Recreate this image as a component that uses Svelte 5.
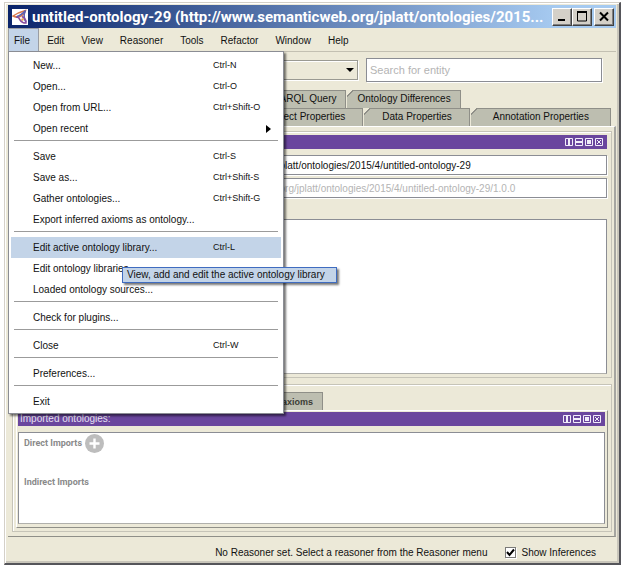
<script>
  const menus = ['File', 'Edit', 'View', 'Reasoner', 'Tools', 'Refactor', 'Window', 'Help'];
  const groups = [
    [
      { label: 'New...', keys: 'Ctrl-N' },
      { label: 'Open...', keys: 'Ctrl-O' },
      { label: 'Open from URL...', keys: 'Ctrl+Shift-O' },
      { label: 'Open recent', sub: true }
    ],
    [
      { label: 'Save', keys: 'Ctrl-S' },
      { label: 'Save as...', keys: 'Ctrl+Shift-S' },
      { label: 'Gather ontologies...', keys: 'Ctrl+Shift-G' },
      { label: 'Export inferred axioms as ontology...' }
    ],
    [
      { label: 'Edit active ontology library...', keys: 'Ctrl-L', active: true, tip: 'View, add and edit the active ontology library' },
      { label: 'Edit ontology libraries...' },
      { label: 'Loaded ontology sources...' }
    ],
    [{ label: 'Check for plugins...' }],
    [{ label: 'Close', keys: 'Ctrl-W' }],
    [{ label: 'Preferences...' }],
    [{ label: 'Exit' }]
  ];
  let iri = $state('http://www.semanticweb.org/jplatt/ontologies/2015/4/untitled-ontology-29');
  let version = $state('');
  let search = $state('');
  let inferences = $state(true);
</script>

{#snippet viewButtons()}
  <span class="view-buttons">
    <button aria-label="Split vertically"><svg width="8" height="8" viewBox="0 0 8 8"><path d="M.5 .5h7v7h-7z" /><path d="M4 0v8" stroke-width="2" /></svg></button>
    <button aria-label="Split horizontally"><svg width="8" height="8" viewBox="0 0 8 8"><path d="M.5 .5h7v7h-7z" /><path d="M0 4h8" stroke-width="2" /></svg></button>
    <button aria-label="Float view"><svg width="8" height="8" viewBox="0 0 8 8"><path d="M.5 .5h7v7h-7z" /><path class="solid" d="M2 2h4v4h-4z" /></svg></button>
    <button aria-label="Close view"><svg width="8" height="8" viewBox="0 0 8 8"><path d="M.5 .5h7v7h-7zM2 2l4 4M6 2l-4 4" /></svg></button>
  </span>
{/snippet}

<div class="window">
  <header class="title-bar">
    <svg class="logo" width="16" height="16" viewBox="0 0 16 16">
      <rect width="16" height="16" fill="#fff" />
      <g fill="none" stroke-width="1.5">
        <path d="M1 7Q6 3.500 13.500 1.500Q12 6 7 8Q4 8.500 1 7Z" stroke="#d9784a" />
        <path d="M5 7.500Q9 6.500 13.500 1.500Q10.500 8 14 13" stroke="#5a5fb4" />
        <path d="M4 8Q7 8 8 11Q10 14 14 14Q14.500 10 10 7.500" stroke="#8a4f9f" />
      </g>
      <circle cx="10.500" cy="10.500" r="1.200" fill="#e3a24a" />
    </svg>
    <h1>untitled-ontology-29 (http://www.semanticweb.org/jplatt/ontologies/2015...</h1>
    <div class="controls">
      <button aria-label="Minimize"><svg width="12" height="11" viewBox="0 0 12 11"><path d="M2 9h7" stroke-width="2" /></svg></button>
      <button aria-label="Maximize"><svg width="12" height="11" viewBox="0 0 12 11"><path d="M1.500 1v9h9v-9" /><path d="M1 1h10" stroke-width="2" /></svg></button>
      <button class="close" aria-label="Close"><svg width="12" height="11" viewBox="0 0 12 11"><path d="M2 1.500l8 8M10 1.500l-8 8" stroke-width="2" /></svg></button>
    </div>
  </header>

  <nav class="menu-bar">
    {#each menus as name, i}
      <button class:open={i === 0}>{name}</button>
    {/each}
    <div class="menu">
      {#each groups as group, g}
        {#if g > 0}<hr />{/if}
        {#each group as item}
          <button class="item" class:active={item.active}>
            <span>{item.label}</span>
            {#if item.keys}<kbd>{item.keys}</kbd>{/if}
            {#if item.sub}<svg class="arrow" width="5" height="8" viewBox="0 0 5 8"><path d="M0 0l5 4l-5 4z" /></svg>{/if}
            {#if item.tip}<span class="tip" role="tooltip">{item.tip}</span>{/if}
          </button>
        {/each}
      {/each}
    </div>
  </nav>

  <div class="toolbar">
    <span class="combo">
      <select aria-label="Active ontology"><option></option></select>
      <svg width="8" height="4" viewBox="0 0 8 4"><path d="M0 0h8l-4 4z" /></svg>
    </span>
    <input type="search" aria-label="Search" placeholder="Search for entity" bind:value={search} />
  </div>

  <div class="tabs upper">
    <button>SPARQL Query</button>
    <button>Ontology Differences</button>
  </div>
  <div class="tabs lower">
    <button>Object Properties</button>
    <button>Data Properties</button>
    <button class="wide">Annotation Properties</button>
  </div>

  <main>
    <section class="panel">
      <div class="view-head">{@render viewButtons()}</div>
      <div class="form">
        <label for="iri">Ontology IRI</label>
        <input id="iri" bind:value={iri} />
        <label for="version">Version IRI</label>
        <input id="version" bind:value={version} placeholder="e.g. http://www.semanticweb.org/jplatt/ontologies/2015/4/untitled-ontology-29/1.0.0" />
      </div>
      <div class="list annotations"></div>
    </section>

    <section class="panel second">
      <div class="sub-tabs"><button>General class axioms</button></div>
      <div class="sheet">
        <div class="view-head"><h2>Imported ontologies:</h2>{@render viewButtons()}</div>
        <div class="list imports">
          <div class="row">
            <h3>Direct Imports</h3>
            <button class="add" aria-label="Add import"><svg width="19" height="19" viewBox="0 0 19 19"><circle cx="9.500" cy="9.500" r="9.500" fill="#bdbdbd" /><path d="M9.500 4.500v10M4.500 9.500h10" stroke="#fff" stroke-width="2.400" /></svg></button>
          </div>
          <div class="row"><h3>Indirect Imports</h3></div>
        </div>
      </div>
    </section>
  </main>

  <footer>
    <span>No Reasoner set. Select a reasoner from the Reasoner menu</span>
    <label>
      <span class="check">
        <input type="checkbox" bind:checked={inferences} />
        {#if inferences}<svg width="9" height="9" viewBox="0 0 9 9"><path d="M1 4l2.500 3l4.500 -5.500" /></svg>{/if}
      </span>
      Show Inferences
    </label>
  </footer>
</div>

<style>
  :global(body) {
    background: #fff;
  }
  .window,
  .window * {
    box-sizing: border-box;
  }
  .window {
    margin: 2px 3px 0 4px;
    padding: 2px 3px 1px;
    border: 1px solid #d4d0c8;
    border-right: 2px solid #55555a;
    border-bottom: 2px solid #55555a;
    background: #ece9d8;
    box-shadow: inset 1px 1px #fff, inset -2px -2px #c9c6bb;
    font: 10px/14px "Liberation Sans", Arial, sans-serif;
    color: #111;
  }
  button {
    font: inherit;
    color: inherit;
    border: 0;
    margin: 0;
    padding: 0;
    background: none;
    white-space: nowrap;
  }
  input {
    font: inherit;
    color: #111;
    min-width: 0;
    margin: 0;
    border: 1px solid #8b8d94;
    border-radius: 0;
    background: #fff;
    outline: 0;
    box-shadow: 1px 1px #fff;
  }
  input::placeholder {
    color: #b4b4b4;
    opacity: 1;
  }
  h1,
  h2,
  h3 {
    margin: 0;
    font: inherit;
  }

  .title-bar {
    display: flex;
    align-items: center;
    height: 23px;
    padding: 0 2px 0 4px;
    background: linear-gradient(90deg, #0a246a, #a6caf0 90%);
  }
  .logo {
    flex: none;
  }
  h1 {
    flex: 1;
    min-width: 0;
    margin-left: 4px;
    overflow: hidden;
    white-space: nowrap;
    font: bold 15px/20px Roboto, "Open Sans", sans-serif;
    color: #fff;
  }
  .controls {
    display: flex;
  }
  .controls button {
    display: flex;
    align-items: center;
    justify-content: center;
    width: 20px;
    height: 18px;
    background: #d4d0c8;
    border: 1px solid;
    border-color: #fff #404040 #404040 #fff;
    box-shadow: inset -1px -1px #808080;
  }
  .controls .close {
    margin-left: 2px;
  }
  .controls path {
    fill: none;
    stroke: #000;
  }

  .menu-bar {
    position: relative;
    display: flex;
    height: 24px;
    border-bottom: 1px solid #c3c0b2;
  }
  .menu-bar > button {
    padding: 3px 9px 0 8px;
  }
  .menu-bar > .open {
    background: #c3d4e8;
    border: 1px solid #9a9da3;
    border-bottom: 0;
    padding: 2px 8px 0 5px;
  }
  .menu {
    position: absolute;
    z-index: 2;
    top: 23px;
    left: 0;
    width: 276px;
    padding: 3px 2px 1px;
    background: #fff;
    border: 1px solid #8b8d94;
    box-shadow: 2px 2px 2px #0008;
  }
  .menu-bar .item {
    position: relative;
    display: flex;
    align-items: center;
    width: 100%;
    height: 21px;
    padding: 0 0 0 22px;
    text-align: left;
  }
  .item.active {
    background: #c3d4e8;
  }
  kbd {
    position: absolute;
    left: 202px;
    top: 3px;
    font: 9px/14px "Liberation Sans", Arial, sans-serif;
  }
  .arrow {
    margin-left: auto;
    margin-right: 10px;
  }
  .menu hr {
    height: 1px;
    margin: 1px 3px 5px;
    border: 0;
    background: #9b9b9b;
  }
  .tip {
    position: absolute;
    z-index: 3;
    left: 111px;
    top: 30px;
    padding: 0 11px 0 4px;
    border: 1px solid #3f6cc0;
    background: #c3d4e8;
    box-shadow: 2px 2px 2px #0008;
  }

  .toolbar {
    display: grid;
    grid-template-columns: 350px 1fr;
    align-items: center;
    gap: 8px;
    height: 38px;
    padding: 0 14px 2px 0;
  }
  .combo {
    position: relative;
    display: flex;
    align-items: center;
  }
  .combo svg {
    position: absolute;
    right: 4px;
  }
  select {
    appearance: none;
    width: 100%;
    height: 20px;
    background: #ece9d8;
    border: 1px solid #9a9a92;
    border-radius: 0;
    box-shadow: inset 1px 1px #fff, 1px 1px #fff;
  }
  .toolbar input {
    height: 24px;
    padding: 0 3px;
    font-size: 11px;
  }

  .tabs {
    display: flex;
    height: 18px;
  }
  .tabs button {
    margin-right: 1px;
    background:
      linear-gradient(135deg, #ece9d8 0 4px, #8f8f88 4px 5px, #bdbeb0 5px) 0 0 / 7px 7px no-repeat,
      linear-gradient(#8f8f88, #8f8f88) 0 0 / 100% 1px no-repeat,
      linear-gradient(#8f8f88, #8f8f88) 100% 0 / 1px 100% no-repeat,
      #bdbeb0;
  }
  .upper {
    padding-left: 249px;
  }
  .upper button {
    padding: 0 10px;
  }
  .lower {
    padding-left: 242px;
  }
  .lower button {
    padding: 0 18px;
  }
  .lower .wide {
    padding: 0 22px;
  }

  main {
    display: flex;
    flex-direction: column;
    gap: 6px;
    padding: 4px 2px 4px 4px;
    border-top: 1px solid #fff;
    border-right: 2px solid #a5a5a0;
    border-bottom: 1px solid #8f8f88;
  }
  .panel {
    padding: 3px 4px;
    border: 1px solid #c6c4b8;
    box-shadow: inset 1px 1px #fff;
  }
  .view-head {
    display: flex;
    align-items: center;
    height: 14px;
    padding: 0 4px 0 2px;
    background: #6a469e;
    color: #e8e3f2;
  }
  .view-buttons {
    display: flex;
    gap: 2px;
    margin-left: auto;
  }
  .view-buttons svg {
    display: block;
  }
  .view-buttons path {
    fill: none;
    stroke: #f1ecfa;
  }
  .view-buttons .solid {
    fill: #f1ecfa;
    stroke: none;
  }
  .form {
    display: grid;
    grid-template-columns: 129px 1fr;
    grid-auto-rows: 20px;
    gap: 3px 0;
    align-items: center;
    margin-top: 6px;
  }
  .form input {
    height: 20px;
    padding: 0 3px;
  }
  .list {
    background: #fff;
    border: 1px solid #8b8d94;
    border-bottom-color: #b0b0ac;
  }
  .annotations {
    min-height: 155px;
    margin-top: 21px;
  }
  .second {
    padding: 7px 3px 3px;
  }
  .sub-tabs {
    display: flex;
    height: 18px;
    padding-left: 195px;
  }
  .sub-tabs button {
    padding: 0 9px;
    font: bold 9px/14px "Liberation Sans", Arial, sans-serif;
    color: #3c3c36;
    background: #bdbeb0;
    border: 1px solid #8f8f88;
    border-bottom: 0;
  }
  .sheet {
    padding: 1px 2px 3px 1px;
    border: 1px solid #fff;
    border-right-color: #8f8f88;
    border-bottom-color: #8f8f88;
  }
  .imports {
    min-height: 92px;
    margin-top: 6px;
    padding: 0 5px;
  }
  .row {
    display: flex;
    align-items: center;
    gap: 3px;
    height: 20px;
  }
  .row + .row {
    margin-top: 19px;
  }
  h3 {
    font: bold 9px/14px Roboto, sans-serif;
    color: #8a8a8a;
  }
  .add svg {
    display: block;
  }

  footer {
    display: flex;
    align-items: center;
    justify-content: flex-end;
    gap: 17px;
    height: 25px;
    padding: 6px 20px 0 0;
  }
  footer label {
    display: flex;
    align-items: center;
    gap: 6px;
  }
  .check {
    position: relative;
    display: flex;
  }
  .check input {
    appearance: none;
    width: 11px;
    height: 11px;
    border-color: #7a7a78;
  }
  .check svg {
    position: absolute;
    left: 1px;
    top: 1px;
    pointer-events: none;
  }
  .check path {
    fill: none;
    stroke: #000;
    stroke-width: 2;
  }
</style>
